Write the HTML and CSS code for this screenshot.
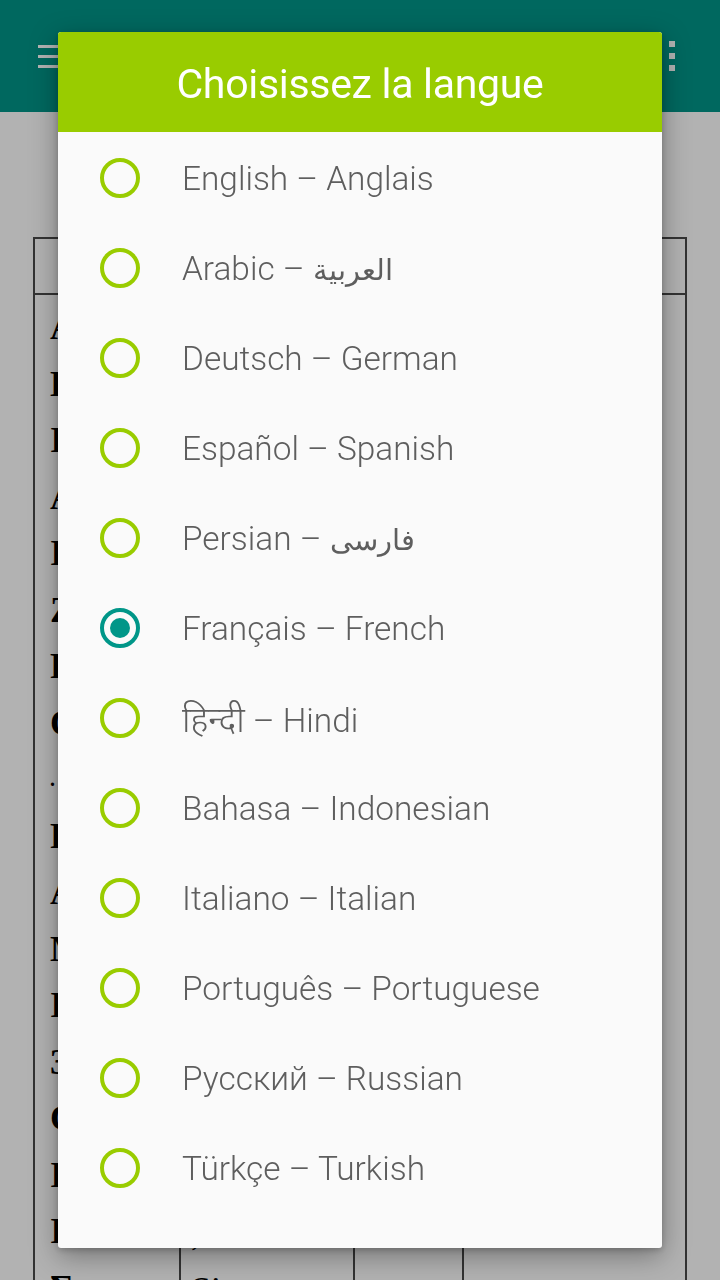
FILE: index.html
```html
<!DOCTYPE html>
<html lang="fr">
<head>
<meta charset="utf-8">
<title>Choisissez la langue</title>
<link rel="stylesheet" href="styles.css">
</head>
<body>
<div class="app">
  <header class="toolbar">
    <div class="hamburger"><span></span><span></span><span></span></div>
    <div class="overflow"><span></span><span></span><span></span></div>
  </header>
  <main class="content">
    <div class="table">
      <div class="thead"></div>
      <div class="tbody">
        <div class="col col1">
          <div>A</div><div>E</div><div>I</div><div>A</div><div>I</div>
          <div>Z</div><div>F</div><div>C</div><div class="small">.</div><div>F</div>
          <div>A</div><div>M</div><div>I</div><div>3</div><div>C</div>
          <div>I</div><div>I</div><div>Σ</div>
        </div>
        <div class="col col2"><div class="comma">,</div><div>Si</div></div>
        <div class="col col3"><div>S</div></div>
        <div class="col col4"><div>i</div></div>
      </div>
    </div>
  </main>
</div>
<div class="scrim"></div>
<div class="dialog">
  <div class="dialog-title">Choisissez la langue</div>
  <ul class="lang-list">
    <li class="lang"><span class="radio"></span><span class="label">English – Anglais</span></li>
    <li class="lang"><span class="radio"></span><span class="label">Arabic – <span class="ar">العربية</span></span></li>
    <li class="lang"><span class="radio"></span><span class="label">Deutsch – German</span></li>
    <li class="lang"><span class="radio"></span><span class="label">Español – Spanish</span></li>
    <li class="lang"><span class="radio"></span><span class="label">Persian – <span class="ar">فارسی</span></span></li>
    <li class="lang selected"><span class="radio"></span><span class="label">Français – French</span></li>
    <li class="lang"><span class="radio"></span><span class="label"><span class="hi">हिन्दी</span> – Hindi</span></li>
    <li class="lang"><span class="radio"></span><span class="label">Bahasa – Indonesian</span></li>
    <li class="lang"><span class="radio"></span><span class="label">Italiano – Italian</span></li>
    <li class="lang"><span class="radio"></span><span class="label">Português – Portuguese</span></li>
    <li class="lang"><span class="radio"></span><span class="label">Русский – Russian</span></li>
    <li class="lang"><span class="radio"></span><span class="label">Türkçe – Turkish</span></li>
  </ul>
</div>
</body>
</html>
```
FILE: styles.css
```css
html, body {
  margin: 0;
  padding: 0;
  width: 720px;
  height: 1280px;
  overflow: hidden;
  background: #ffffff;
}

.app {
  width: 720px;
  height: 1280px;
  display: flex;
  flex-direction: column;
}

.toolbar {
  height: 112px;
  flex: none;
  background: #009688;
  display: flex;
  justify-content: space-between;
  align-items: flex-start;
  padding: 0 45px 0 38px;
  box-sizing: border-box;
}

.hamburger {
  padding-top: 45px;
  display: flex;
  flex-direction: column;
  gap: 7px;
}
.hamburger span {
  display: block;
  width: 22px;
  height: 3px;
  background: #ffffff;
}

.overflow {
  padding-top: 41px;
  display: flex;
  flex-direction: column;
  gap: 6px;
}
.overflow span {
  display: block;
  width: 6px;
  height: 6px;
  background: #ffffff;
}

.content {
  flex: 1;
  padding: 125px 0 0 33px;
  overflow: hidden;
}

.table {
  width: 654px;
  border: 2px solid #4a4a4a;
  border-bottom: none;
  box-sizing: border-box;
  font-family: "Liberation Serif", serif;
  font-size: 36px;
  font-weight: bold;
  color: #000;
}

.thead {
  height: 54px;
  border-bottom: 2px solid #4a4a4a;
}

.tbody {
  display: grid;
  grid-template-columns: 144px 174px 109px 223px;
}

.col {
  padding-top: 4px;
  line-height: 56.5px;
  white-space: nowrap;
  overflow: hidden;
}
.col1 {
  padding-left: 15px;
}
.col2, .col3, .col4 {
  border-left: 2px solid #4a4a4a;
  padding-top: 910px;
  font-weight: normal;
}
.col2 { padding-left: 10px; }
.col3 { padding-left: 45px; }
.col4 { padding-left: 6px; }
.col1 .small { font-size: 20px; }

.scrim {
  position: fixed;
  inset: 0;
  background: rgba(0, 0, 0, 0.3);
}

.dialog {
  position: absolute;
  left: 58px;
  top: 32px;
  width: 604px;
  height: 1216px;
  background: #fafafa;
  border-radius: 3px;
  overflow: hidden;
  box-shadow: 0 8px 28px rgba(0, 0, 0, 0.35), 0 2px 6px rgba(0, 0, 0, 0.2);
  font-family: Roboto, "Noto Sans", "DejaVu Sans", sans-serif;
}

.dialog-title {
  height: 100px;
  background: #99cc00;
  color: #ffffff;
  font-size: 41px;
  letter-spacing: -0.3px;
  display: flex;
  align-items: center;
  justify-content: center;
  padding-top: 4px;
  box-sizing: border-box;
}

.lang-list {
  list-style: none;
  margin: 0;
  padding: 1px 0 0 0;
}

.lang {
  height: 90px;
  display: flex;
  align-items: center;
  padding-left: 42px;
}

.radio {
  flex: none;
  width: 40px;
  height: 40px;
  box-sizing: border-box;
  border: 4px solid #99cc00;
  border-radius: 50%;
  display: flex;
  align-items: center;
  justify-content: center;
}

.lang.selected .radio {
  border-color: #009688;
}
.lang.selected .radio::after {
  content: "";
  width: 20px;
  height: 20px;
  border-radius: 50%;
  background: #009688;
}

.label {
  margin-left: 42px;
  font-size: 33.4px;
  font-weight: 300;
  color: #5e5e5e;
  white-space: nowrap;
}

.ar {
  font-size: 29px;
}

.hi {
  font-size: 35px;
}
```
